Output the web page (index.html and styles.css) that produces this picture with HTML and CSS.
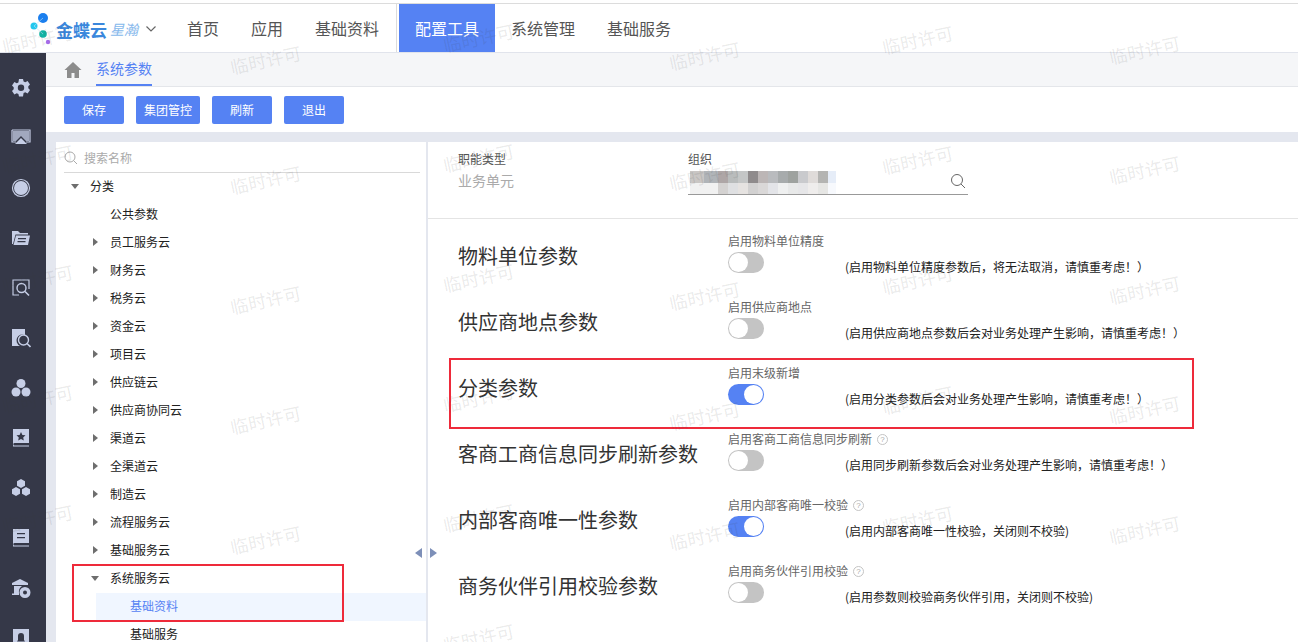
FILE: index.html
```html
<!DOCTYPE html>
<html lang="zh-CN">
<head>
<meta charset="utf-8">
<title>系统参数</title>
<link rel="stylesheet" href="styles.css">
</head>
<body>
<div class="app">
  <header class="topbar">
    <div class="logo">
      <svg class="logo-mark" width="28" height="34" viewBox="0 0 28 34"><circle cx="13" cy="6" r="5" fill="#1b7fee"/><circle cx="4" cy="14" r="3.5" fill="#22c7ee"/><circle cx="13" cy="22" r="3.8" fill="#14b5a5"/><circle cx="18" cy="30" r="2.2" fill="#a56be8"/><path d="M13 6L4 14L13 22" fill="none" stroke="#bfe4f7" stroke-width=".6"/></svg>
      <span class="logo-main">金蝶云</span><span class="logo-sub">星瀚</span>
      <svg class="logo-chev" width="12" height="8" viewBox="0 0 12 8"><path d="M1.5 1.5L6 6L10.5 1.5" fill="none" stroke="#666" stroke-width="1.2"/></svg>
    </div>
    <nav class="nav">
      <a class="nav-item">首页</a>
      <a class="nav-item">应用</a>
      <a class="nav-item nav-sep">基础资料</a>
      <a class="nav-item nav-active">配置工具</a>
      <a class="nav-item">系统管理</a>
      <a class="nav-item">基础服务</a>
    </nav>
  </header>

  <div class="body">
    <aside class="rail">
      <svg class="rail-icon" viewBox="0 0 20 20"><path fill-rule="evenodd" d="M8 1h4l.6 2.4 1.7.8L16.600 3l2.400 3.500-1.700 1.800v1.900l1.700 1.800-2.400 3.500-2.300-1.200-1.700.8L12 18.500H8l-.6-2.400-1.700-.8L3.400 16.500 1 13l1.700-1.800V9.300L1 7.500 3.400 4l2.300 1.200 1.700-.8zM10 6.500a3.200 3.200 0 1 0 0 6.400 3.200 3.200 0 0 0 0-6.400z"/></svg>
      <svg class="rail-icon" viewBox="0 0 20 20"><path fill="none" stroke="currentColor" stroke-width="1.200" d="M1 2h18v12h-4"/><path fill="none" stroke="currentColor" stroke-width="1.200" d="M5 14H1V2"/><path d="M2 3h16v10h-3l-5-5-5 5H2z" opacity=".75"/><path d="M10 10l6 6H4z"/></svg>
      <svg class="rail-icon" viewBox="0 0 20 20"><circle cx="10" cy="10" r="8.500" fill="none" stroke="currentColor" stroke-width="1.200"/><circle cx="10" cy="10" r="7"/></svg>
      <svg class="rail-icon" viewBox="0 0 20 20"><path d="M1 3h6l2 2h8v1.500H4.500L2 16H1z"/><path fill-rule="evenodd" d="M5 7.500h14L17 17H2.500zM7 10v1.200h8V10zm-.5 3v1.200h8V13z"/></svg>
      <svg class="rail-icon" viewBox="0 0 20 20"><path fill="none" stroke="currentColor" stroke-width="1.200" d="M8 17H2V2h16v9"/><circle cx="10.500" cy="10" r="4.500" fill="none" stroke="currentColor" stroke-width="1.400"/><path d="M14 13.500l4 4" stroke="currentColor" stroke-width="1.600"/></svg>
      <svg class="rail-icon" viewBox="0 0 20 20"><path d="M1 1h13v6a6 6 0 0 0-5 11H1z"/><circle cx="12.500" cy="12" r="5" fill="none" stroke="currentColor" stroke-width="1.400"/><path d="M16 15.500l3.500 3.500" stroke="currentColor" stroke-width="1.600"/></svg>
      <svg class="rail-icon" viewBox="0 0 20 20"><circle cx="10" cy="5.500" r="4.500"/><circle cx="5" cy="14" r="4.500"/><circle cx="15" cy="14" r="4.500"/></svg>
      <svg class="rail-icon" viewBox="0 0 20 20"><path d="M2 1h16v14H3.500a1.200 1.200 0 0 0 0 2.400H18v1H2z"/><path fill="#353848" d="M10 4l1.400 2.900 3.100.4-2.300 2.100.6 3.100L10 11l-2.800 1.500.6-3.100-2.300-2.100 3.100-.4z"/></svg>
      <svg class="rail-icon" viewBox="0 0 20 20"><path d="M10 1l4 2.300v4.400L10 10 6 7.700V3.300z"/><path d="M5 9l4 2.300v4.400L5 18l-4-2.300v-4.400z"/><path d="M15 9l4 2.300v4.400L15 18l-4-2.300v-4.400z"/></svg>
      <svg class="rail-icon" viewBox="0 0 20 20"><path fill-rule="evenodd" d="M2 1h16v14H3.500a1.200 1.200 0 0 0 0 2.400H18v1H2zM6 5v1.200h8V5zm0 4v1.200h8V9z"/></svg>
      <svg class="rail-icon" viewBox="0 0 20 20"><path d="M9 1l8 4v2H1V5zM3 8h8a7 7 0 0 0-3 7v2H1v-1.500h2z"/><path fill-rule="evenodd" d="M14 9a5.500 5.500 0 1 1 0 11 5.500 5.500 0 0 1 0-11zm0 3.500a2 2 0 1 0 0 4 2 2 0 0 0 0-4z"/></svg>
      <svg class="rail-icon" viewBox="0 0 20 20"><path fill-rule="evenodd" d="M2 1h16v18H2zM10 5a3 3 0 0 0-3 3v4l-1 1.500h8L13 12V8a3 3 0 0 0-3-3z"/></svg>
    </aside>

    <main class="content">
      <div class="crumbs">
        <svg class="home" width="18" height="18" viewBox="0 0 18 18"><path fill="#8c8c8c" d="M9 1L0.500 9H3v8h4.500v-5h3v5H15V9h2.500z"/></svg>
        <span class="crumb-tab">系统参数</span>
      </div>
      <div class="toolbar">
        <button class="btn">保存</button>
        <button class="btn btn-wide">集团管控</button>
        <button class="btn">刷新</button>
        <button class="btn">退出</button>
      </div>
      <div class="workspace">
        <section class="tree-panel">
          <div class="search">
            <svg width="14" height="14" viewBox="0 0 14 14"><circle cx="6" cy="6" r="5" fill="none" stroke="#aaa"/><path d="M9.500 9.500L13 13" stroke="#aaa"/></svg>
            <span>搜索名称</span>
          </div>
          <ul class="tree">
            <li class="node l0"><i class="caret open"></i>分类</li>
            <li class="node l1"><i class="caret none"></i>公共参数</li>
            <li class="node l1"><i class="caret"></i>员工服务云</li>
            <li class="node l1"><i class="caret"></i>财务云</li>
            <li class="node l1"><i class="caret"></i>税务云</li>
            <li class="node l1"><i class="caret"></i>资金云</li>
            <li class="node l1"><i class="caret"></i>项目云</li>
            <li class="node l1"><i class="caret"></i>供应链云</li>
            <li class="node l1"><i class="caret"></i>供应商协同云</li>
            <li class="node l1"><i class="caret"></i>渠道云</li>
            <li class="node l1"><i class="caret"></i>全渠道云</li>
            <li class="node l1"><i class="caret"></i>制造云</li>
            <li class="node l1"><i class="caret"></i>流程服务云</li>
            <li class="node l1"><i class="caret"></i>基础服务云</li>
            <li class="node l1"><i class="caret open"></i>系统服务云</li>
            <li class="node l2 selected">基础资料</li>
            <li class="node l2">基础服务</li>
          </ul>
        </section>
        <div class="splitter"><i class="arrow arrow-l"></i><i class="arrow arrow-r"></i></div>
        <section class="detail">
          <div class="filters">
            <div class="filter filter-type">
              <label>职能类型</label>
              <span class="filter-value">业务单元</span>
            </div>
            <div class="filter filter-org">
              <label>组织</label>
              <div class="org-input">
                <div class="mosaic"></div>
                <svg width="16" height="16" viewBox="0 0 16 16"><circle cx="7" cy="7" r="5.500" fill="none" stroke="#666"/><path d="M11 11l4 4" stroke="#666"/></svg>
              </div>
            </div>
          </div>
          <div class="params">
            <div class="param">
              <h3>物料单位参数</h3>
              <div class="ctrl"><span class="ctrl-label">启用物料单位精度</span><span class="switch"></span></div>
              <p class="note">(启用物料单位精度参数后，将无法取消，请慎重考虑！）</p>
            </div>
            <div class="param">
              <h3>供应商地点参数</h3>
              <div class="ctrl"><span class="ctrl-label">启用供应商地点</span><span class="switch"></span></div>
              <p class="note">(启用供应商地点参数后会对业务处理产生影响，请慎重考虑！）</p>
            </div>
            <div class="param">
              <h3>分类参数</h3>
              <div class="ctrl"><span class="ctrl-label">启用末级新增</span><span class="switch on"></span></div>
              <p class="note">(启用分类参数后会对业务处理产生影响，请慎重考虑！）</p>
            </div>
            <div class="param">
              <h3>客商工商信息同步刷新参数</h3>
              <div class="ctrl"><span class="ctrl-label">启用客商工商信息同步刷新<i class="help">?</i></span><span class="switch"></span></div>
              <p class="note">(启用同步刷新参数后会对业务处理产生影响，请慎重考虑！）</p>
            </div>
            <div class="param">
              <h3>内部客商唯一性参数</h3>
              <div class="ctrl"><span class="ctrl-label">启用内部客商唯一校验<i class="help">?</i></span><span class="switch on"></span></div>
              <p class="note">(启用内部客商唯一性校验，关闭则不校验)</p>
            </div>
            <div class="param">
              <h3>商务伙伴引用校验参数</h3>
              <div class="ctrl"><span class="ctrl-label">启用商务伙伴引用校验<i class="help">?</i></span><span class="switch"></span></div>
              <p class="note">(启用参数则校验商务伙伴引用，关闭则不校验)</p>
            </div>
          </div>
        </section>
      </div>
    </main>
  </div>

  <div class="mark-box mark-tree"></div>
  <div class="mark-box mark-param"></div>

  <div class="watermarks" aria-hidden="true">
    <div class="wm-col"><span>临时许可</span><span>临时许可</span><span>临时许可</span><span>临时许可</span><span>临时许可</span></div>
    <div class="wm-col"><span>临时许可</span><span>临时许可</span><span>临时许可</span><span>临时许可</span><span>临时许可</span></div>
    <div class="wm-col"><span>临时许可</span><span>临时许可</span><span>临时许可</span><span>临时许可</span><span>临时许可</span><span>临时许可</span></div>
    <div class="wm-col"><span>临时许可</span><span>临时许可</span><span>临时许可</span><span>临时许可</span><span>临时许可</span></div>
    <div class="wm-col"><span>临时许可</span><span>临时许可</span><span>临时许可</span><span>临时许可</span><span>临时许可</span></div>
    <div class="wm-col"><span>临时许可</span><span>临时许可</span><span>临时许可</span><span>临时许可</span><span>临时许可</span></div>
  </div>
</div>
</body>
</html>
```
FILE: styles.css
```css
* { box-sizing: border-box; }
html, body { margin: 0; padding: 0; height: 100%; overflow: hidden; background: #fff; }
body { font-family: "Noto Sans CJK SC", "Liberation Sans", sans-serif; font-size: 12px; color: #212121; }
ul { list-style: none; margin: 0; padding: 0; }
h3, p { margin: 0; font-weight: 400; }

.app { position: relative; width: 1298px; height: 642px; overflow: hidden; padding-top: 3px; display: flex; flex-direction: column; }

/* top bar */
.topbar { flex: none; height: 50px; display: flex; border-top: 1px solid #dcdcdc; border-bottom: 1px solid #e1e4ec; background: #fff; }
.logo { width: 171px; display: flex; align-items: center; padding: 2px 0 0 30px; }
.logo-mark { flex: none; margin: 0 -2px 0 0; }
.logo-main { font-size: 17px; font-weight: 700; color: #3a87dc; line-height: 1; }
.logo-sub { font-size: 14px; font-style: italic; color: #86b8ec; margin-left: 3px; line-height: 1; }
.logo-chev { margin-left: 7px; flex: none; }
.nav { display: flex; }
.nav-item { padding: 0 16px; font-size: 16px; line-height: 48px; color: #555; }
.nav-sep { padding-right: 17px; border-right: 1px solid #dcdcdc; margin-right: 2px; height: 48px; }
.nav-active { background: #5582f3; color: #fff; }

/* main */
.body { flex: 1; min-height: 0; display: flex; }
.rail { flex: none; width: 46px; background: #353848; color: #c6cee6; display: flex; flex-direction: column; align-items: center; padding: 25px 4px 0 0; gap: 30px; overflow: hidden; }
.rail-icon { flex: none; width: 20px; height: 20px; fill: currentColor; }
.content { flex: 1; min-width: 0; display: flex; flex-direction: column; }

.crumbs { flex: none; height: 34px; background: #f5f6f8; border-bottom: 1px solid #e4e6ea; display: flex; align-items: center; padding-left: 18px; }
.home { flex: none; margin-right: 14px; }
.crumb-tab { height: 33px; line-height: 30px; font-size: 14px; color: #5582f3; border-bottom: 2px solid #5582f3; }

.toolbar { flex: none; height: 45px; display: flex; gap: 12px; padding: 9px 0 0 18px; background: #fff; }
.btn { width: 60px; height: 28px; padding: 0; border: 0; border-radius: 2px; background: #5582f3; color: #fff; font: 12px/28px "Noto Sans CJK SC", sans-serif; }
.btn-wide { width: 64px; }

.workspace { flex: 1; min-height: 0; display: flex; background: #e4e7ef; padding: 10px 0 0 10px; }

/* tree */
.tree-panel { flex: none; width: 370px; background: #fff; overflow: hidden; }
.search { height: 31px; margin: 0 6px 0 8px; display: flex; align-items: center; gap: 6px; border-bottom: 1px solid #d9d9d9; color: #aaa; padding-top: 1px; }
.node { height: 28px; padding-bottom: 2px; line-height: 26px; display: flex; align-items: center; white-space: nowrap; }
.l0 { padding-left: 15px; }
.l1 { padding-left: 37px; }
.l2 { padding-left: 74px; }
.caret { flex: none; width: 0; height: 0; border-style: solid; border-width: 4.500px 0 4.500px 5px; border-color: transparent transparent transparent #6e6e6e; margin-right: 12px; }
.caret.open { border-width: 5px 4.500px 0; border-color: #6e6e6e transparent transparent; margin: 0 11px 0 -2px; }
.caret.none { border-color: transparent; }
.l0 .caret.open { margin: 0 11px 0 0; }
.l1 .caret.open { margin: 0 11px 0 -2px; }
.selected { margin-left: 40px; padding-left: 34px; background: #f0f6ff; color: #5582f3; }

.splitter { flex: none; position: relative; width: 2px; background: #e4e7ef; }
.arrow { position: absolute; top: 406px; width: 0; height: 0; border-style: solid; border-width: 5px 0; border-color: transparent; }
.arrow-l { left: -11px; border-right: 7px solid #7d8fb8; }
.arrow-r { left: 4px; border-left: 7px solid #7d8fb8; }

/* detail */
.detail { flex: 1; min-width: 0; background: #fff; overflow: hidden; }
.filters { height: 77px; border-bottom: 1px solid #e4e4e4; display: flex; padding: 9px 0 0 30px; }
.filter label { display: block; line-height: 16px; color: #555; }
.filter-type { width: 230px; }
.filter-value { display: block; margin-top: 4px; font-size: 14px; line-height: 18px; color: #aaa; }
.filter-org { width: 280px; }
.org-input { position: relative; height: 28px; margin-top: 0; border-bottom: 1px solid #999; display: flex; align-items: center; justify-content: flex-end; padding-right: 2px; }
.mosaic { position: absolute; left: 2px; top: 4px; width: 146px; height: 23px;
  background:
    linear-gradient(90deg, #c9c6c4 0 14px, #b0b4b8 14px 28px, #aea6a6 28px 38px, #b9bcbc 38px 48px, #c4c6c6 48px 58px, #8f8b8c 58px 68px, #bcb6b6 68px 78px, #b9bbbe 78px 88px, #a7abac 88px 98px, #9ea29f 98px 108px, #c9cacd 108px 118px, #dfdbd9 118px 128px, #b4b4b2 128px 138px, #e6edf8 138px 146px) 0 0 / 100% 12px no-repeat,
    linear-gradient(90deg, #f1f1f1 0 28px, #d4d2d1 28px 38px, #dfe0e2 38px 48px, #e6e3e1 48px 58px, #d2d1d1 58px 68px, #dad8d8 68px 78px, #e3e4e8 78px 88px, #eff0f0 88px 98px, #e8e9e9 98px 108px, #e6e6e8 108px 118px, #efedec 118px 128px, #e6e6e4 128px 138px, #f7f9fd 138px 146px) 0 12px / 100% 11px no-repeat; }
.org-input svg { position: relative; }

.params { padding-top: 4px; }
.param { height: 66px; display: grid; grid-template-columns: 270px 117px 1fr; padding-left: 30px; }
.param h3 { font-size: 20px; line-height: 66px; color: #333; white-space: nowrap; }
.ctrl { display: flex; flex-direction: column; align-items: flex-start; padding-top: 10px; }
.ctrl-label { line-height: 16px; color: #666; white-space: nowrap; display: flex; align-items: center; }
.help { margin-left: 5px; width: 11px; height: 11px; border: 1px solid #c4c4c4; border-radius: 50%; font: normal 8px/9px "Liberation Sans", sans-serif; color: #aaa; text-align: center; }
.switch { position: relative; display: block; width: 36px; height: 21px; margin-top: 3px; border-radius: 11px; background: #c4c4c4; }
.switch::after { content: ""; position: absolute; left: 1px; top: 1px; width: 19px; height: 19px; border-radius: 50%; background: #fff; }
.switch.on { background: #5582f3; }
.switch.on::after { left: 16px; }
.note { padding-top: 35px; line-height: 18px; color: #212121; white-space: nowrap; }

/* overlays */
.mark-box { position: absolute; border: 2px solid #ee2a3a; pointer-events: none; }
.mark-tree { left: 72px; top: 564px; width: 272px; height: 58px; }
.mark-param { left: 449px; top: 358px; width: 745px; height: 71px; }

.watermarks { position: absolute; inset: 0; display: flex; margin-left: -63px; pointer-events: none; }
.wm-col { flex: none; width: 222px; display: flex; flex-direction: column; }
.wm-col span { flex: none; height: 120px; line-height: 20px; text-align: center; font-size: 18px; color: rgba(60, 60, 60, .11); transform: rotate(-12deg); }
.wm-col:nth-child(1) { margin-top: 27px; }
.wm-col:nth-child(2) { margin: 48px 0 0 6px; }
.wm-col:nth-child(3) { margin: 26px 0 0 -9px; }
.wm-col:nth-child(4) { margin: 44px 0 0 4px; }
.wm-col:nth-child(5) { margin: 28px 0 0 -9px; }
.wm-col:nth-child(6) { margin: 38px 0 0 5px; }
```
